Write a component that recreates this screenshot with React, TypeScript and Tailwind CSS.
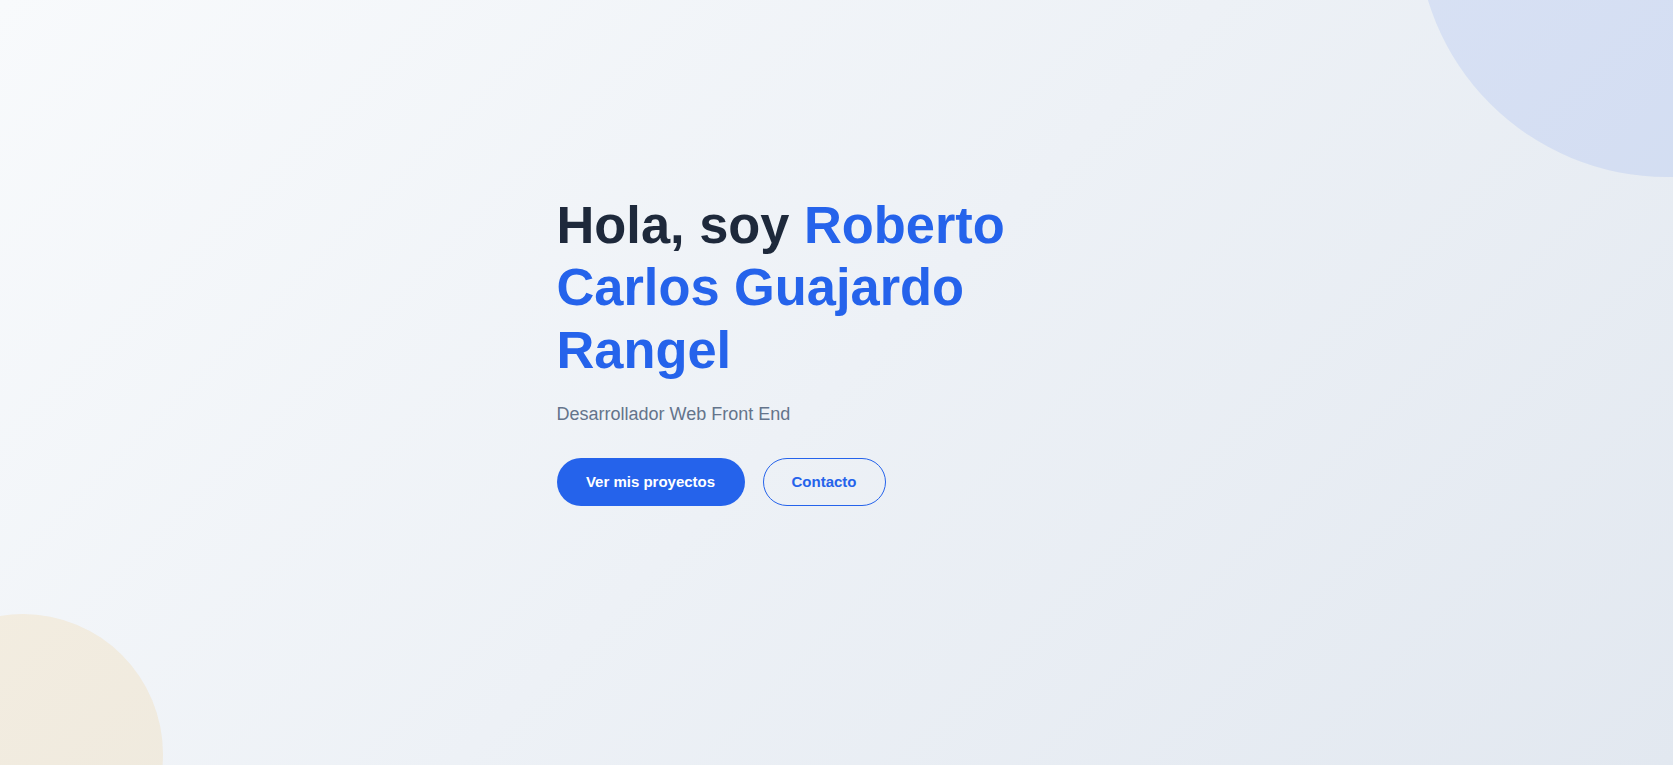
import React from 'react';

const App: React.FC = () => {
    return (
        <main
            className="relative w-full min-h-screen overflow-hidden bg-[linear-gradient(135deg,#f8fafc_0%,#e2e8f0_100%)]"
            style={{ fontFamily: '"Liberation Sans", Arial, sans-serif' }}
        >
            {/* decorative blobs */}
            <div className="absolute top-[-323px] right-[-244px] w-[500px] h-[500px] rounded-full bg-[#2563eb]/10" />
            <div className="absolute bottom-[-129px] left-[-117px] w-[280px] h-[280px] rounded-full bg-[#f59e0b]/10" />

            {/* hero */}
            <section className="relative min-h-screen flex items-center pb-[65px]">
                <div className="w-full max-w-[600px] mx-auto px-5">
                    <h1 className="text-[52.4px] leading-[62.4px] font-bold text-[#1e293b]">
                        Hola, soy <span className="text-[#2563eb]">Roberto Carlos Guajardo Rangel</span>
                    </h1>
                    <p className="mt-5 text-[18px] leading-[27px] text-[#64748b]">Desarrollador Web Front End</p>
                    <div className="mt-[30px] flex items-center gap-[18px]">
                        <a href="#proyectos" className="h-[48px] w-[188px] flex items-center justify-center rounded-full bg-[#2563eb] text-white text-[15px] font-bold">
                            Ver mis proyectos
                        </a>
                        <a href="#contacto" className="h-[48px] w-[123px] flex items-center justify-center rounded-full border border-[#2563eb] text-[#2563eb] text-[15px] font-bold">
                            Contacto
                        </a>
                    </div>
                </div>
            </section>
        </main>
    );
};

export default App;
